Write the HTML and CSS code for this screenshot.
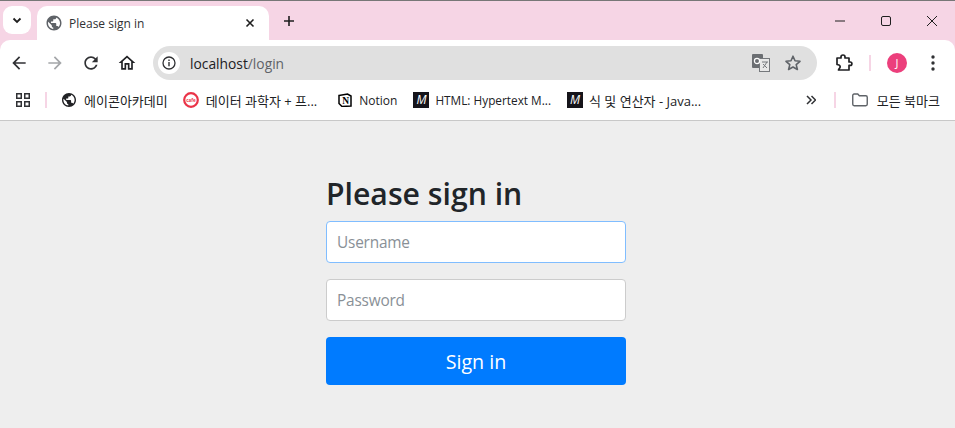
FILE: index.html
```html
<!DOCTYPE html>
<html>
<head>
  <title>Please sign in</title>
  <link rel="stylesheet" href="styles.css">
</head>
<body>
  <!-- Window top: tabs and window buttons -->
  <div class="tab-strip">
    <div class="tab-search">
      <svg width="12" height="12" viewBox="0 0 12 12"><path d="M2.5 4.5 6 8l3.5-3.5" fill="none" stroke="#1f1f1f" stroke-width="1.8"/></svg>
    </div>
    <div class="tab">
      <svg class="tab-globe" width="18" height="18" viewBox="0 0 24 24"><path fill="#5f6368" d="M12 2C6.48 2 2 6.48 2 12s4.48 10 10 10 10-4.48 10-10S17.52 2 12 2zm-1 17.93c-3.95-.49-7-3.85-7-7.93 0-.62.08-1.21.21-1.79L9 15v1c0 1.1.9 2 2 2v1.93zm6.9-2.54c-.26-.81-1-1.39-1.9-1.39h-1v-3c0-.55-.45-1-1-1H8v-2h2c.55 0 1-.45 1-1V7h2c1.1 0 2-.9 2-2v-.41c2.93 1.19 5 4.06 5 7.41 0 2.08-.8 3.97-2.1 5.39z"/></svg>
      <span class="tab-title">Please sign in</span>
      <svg width="10" height="10" viewBox="0 0 10 10"><path d="M1.5 1.5l7 7m0-7l-7 7" stroke="#1f1f1f" stroke-width="1.6"/></svg>
    </div>
    <svg class="new-tab" width="12" height="12" viewBox="0 0 12 12"><path d="M6 1v10M1 6h10" stroke="#1f1f1f" stroke-width="1.6"/></svg>
    <div class="window-buttons">
      <svg width="10" height="10" viewBox="0 0 10 10"><path d="M0 5h10" stroke="#1f1f1f"/></svg>
      <svg width="10" height="10" viewBox="0 0 10 10"><rect x=".5" y=".5" width="9" height="9" rx="1.5" fill="none" stroke="#1f1f1f"/></svg>
      <svg width="10" height="10" viewBox="0 0 10 10"><path d="M0 0l10 10M10 0L0 10" stroke="#1f1f1f"/></svg>
    </div>
  </div>

  <!-- Address bar row -->
  <div class="toolbar">
    <svg class="nav-icon" width="20" height="20" viewBox="0 0 24 24"><path fill="#303134" d="M20 11H7.83l5.59-5.59L12 4l-8 8 8 8 1.41-1.41L7.83 13H20v-2z"/></svg>
    <svg class="nav-icon" width="20" height="20" viewBox="0 0 24 24"><path fill="#a4a6a9" d="M4 11h12.17l-5.59-5.59L12 4l8 8-8 8-1.41-1.41L16.17 13H4v-2z"/></svg>
    <svg class="nav-icon" width="20" height="20" viewBox="0 0 24 24"><path fill="#303134" d="M17.65 6.35C16.2 4.9 14.21 4 12 4c-4.42 0-7.99 3.58-7.99 8s3.57 8 7.99 8c3.73 0 6.84-2.55 7.73-6h-2.08c-.82 2.33-3.04 4-5.65 4-3.31 0-6-2.69-6-6s2.69-6 6-6c1.66 0 3.14.69 4.22 1.78L13 11h7V4l-2.35 2.35z"/></svg>
    <svg class="nav-icon" width="20" height="20" viewBox="0 0 24 24"><path fill="#202124" d="M12 5.69l5 4.5V18h-2v-6H9v6H7v-7.81l5-4.5M12 3L2 12h3v8h6v-6h2v6h6v-8h3L12 3z"/></svg>
    <div class="address-bar">
      <div class="info-badge">
        <svg width="14" height="14" viewBox="0 0 14 14"><circle cx="7" cy="7" r="6" fill="none" stroke="#303134" stroke-width="1.3"/><path d="M7 6v4.2M7 3.6v1.4" stroke="#303134" stroke-width="1.4"/></svg>
      </div>
      <span class="url"><span class="url-host">localhost</span>/login</span>
      <svg class="translate-icon" width="18" height="20" viewBox="0 0 18 20"><rect x="0" y="1" width="11" height="14" rx="1" fill="#6b6e72"/><rect x="7.5" y="5.5" width="10" height="13" fill="#e8e8e8" stroke="#75787c"/><circle cx="5" cy="8" r="2.6" fill="none" stroke="#fff" stroke-width="1.2"/><path d="M10 9h6M15 9l-4 6M11 11l4 4" stroke="#75787c" fill="none"/></svg>
      <svg class="star-icon" width="18" height="18" viewBox="0 0 18 18"><path d="M9 2.2l2 4.6 5 .5-3.8 3.3 1.2 4.900L9 13l-4.400 2.500 1.200-4.900L2 7.300l5-.5z" fill="none" stroke="#5f6368" stroke-width="1.600" stroke-linejoin="round"/></svg>
    </div>
    <svg class="ext-icon" width="18" height="18" viewBox="0 0 18 18"><path d="M2 4h4V3a2 2 0 0 1 4 0v1h4v4h1.200a1.700 1.700 0 0 1 0 3.400H14V16H3.500l.8-1.500a2 2 0 0 0-.3-3.500L2 10.500z" fill="none" stroke="#202124" stroke-width="1.700" stroke-linejoin="round"/></svg>
    <div class="pink-sep"></div>
    <div class="avatar">J</div>
    <svg class="menu-icon" width="4" height="16" viewBox="0 0 4 16"><circle cx="2" cy="2" r="1.700" fill="#303134"/><circle cx="2" cy="8" r="1.700" fill="#303134"/><circle cx="2" cy="14" r="1.700" fill="#303134"/></svg>
  </div>

  <!-- Bookmarks row -->
  <div class="bookmarks">
    <svg class="apps-icon" width="14" height="14" viewBox="0 0 14 14"><g fill="none" stroke="#303134" stroke-width="1.500"><rect x=".75" y=".75" width="4.500" height="4.500"/><rect x="8.750" y=".75" width="4.500" height="4.500"/><rect x=".75" y="8.750" width="4.500" height="4.500"/><rect x="8.750" y="8.750" width="4.500" height="4.500"/></g></svg>
    <div class="pink-sep bookmark-sep"></div>
    <div class="bookmark bookmark-first">
      <svg width="14" height="14" viewBox="2 2 20 20"><path fill="#202124" d="M12 2C6.48 2 2 6.480 2 12s4.480 10 10 10 10-4.480 10-10S17.520 2 12 2zm-1 17.930c-3.950-.49-7-3.850-7-7.930 0-.62.08-1.210.21-1.790L9 15v1c0 1.100.9 2 2 2v1.930zm6.900-2.540c-.26-.81-1-1.390-1.900-1.390h-1v-3c0-.55-.45-1-1-1H8v-2h2c.55 0 1-.45 1-1V7h2c1.100 0 2-.9 2-2v-.41c2.930 1.190 5 4.060 5 7.410 0 2.080-.8 3.970-2.100 5.390z"/></svg>
      <span class="ko">에이콘아카데미</span>
    </div>
    <div class="bookmark bookmark-cafe">
      <svg width="16" height="16" viewBox="0 0 16 16"><circle cx="8" cy="8" r="6.800" fill="#fff" stroke="#ea3348" stroke-width="2.200"/><text x="8" y="9.500" font-size="4.500" font-weight="700" text-anchor="middle" fill="#ea3348">cafe</text></svg>
      <span class="ko">데이터 과학자 + 프...</span>
    </div>
    <div class="bookmark bookmark-notion">
      <svg width="14" height="14" viewBox="0 0 14 14"><path d="M1 2.500 9.500 1 13 3v10l-9 .5L1 10.500z" fill="#fff" stroke="#000" stroke-width="1.500"/><text x="7.800" y="11" font-size="9.500" font-weight="700" text-anchor="middle" class="notion-n">N</text></svg>
      <span>Notion</span>
    </div>
    <div class="bookmark bookmark-mdn">
      <div class="mdn-icon">M</div>
      <span>HTML: Hypertext M...</span>
    </div>
    <div class="bookmark bookmark-mdn">
      <div class="mdn-icon">M</div>
      <span class="ko">식 및 연산자 - Java...</span>
    </div>
    <svg class="more-icon" width="10" height="10" viewBox="0 0 10 10"><path d="M1 1l4 4-4 4M5.500 1l4 4-4 4" fill="none" stroke="#303134" stroke-width="1.500"/></svg>
    <div class="pink-sep bookmark-sep2"></div>
    <div class="bookmark all-bookmarks">
      <svg width="16" height="14" viewBox="0 0 16 14"><path d="M.75 2.500c0-.8.6-1.500 1.400-1.500h3.600l1.600 1.800h6.500c.8 0 1.400.6 1.400 1.400v7.100c0 .8-.6 1.400-1.400 1.400H2.150c-.8 0-1.400-.6-1.400-1.400z" fill="none" stroke="#5f6368" stroke-width="1.400"/></svg>
      <span class="ko">모든 북마크</span>
    </div>
  </div>

  <!-- Login form -->
  <div class="page">
    <form class="signin-form">
      <h2>Please sign in</h2>
      <input class="field field-focus" type="text" placeholder="Username">
      <input class="field" type="password" placeholder="Password">
      <button type="button" class="signin-button">Sign in</button>
    </form>
  </div>
</body>
</html>
```

FILE: styles.css
```css
html, body {
  height: 100%;
}

body {
  margin: 0;
  display: flex;
  flex-direction: column;
  overflow: hidden;
  background-color: #f6d5e5;
  font-family: "Open Sans", "Noto Sans CJK KR", sans-serif;
  color: #1f1f1f;
}

svg {
  display: block;
  flex: none;
}

/* Tab strip */
.tab-strip {
  height: 39px;
  border-top: 1px solid #777;
  display: flex;
  align-items: flex-start;
}

.tab-search {
  width: 28px;
  height: 28px;
  margin: 5px 0 0 3px;
  background-color: #fff;
  border-radius: 9px;
  display: flex;
  align-items: center;
  justify-content: center;
}

.tab {
  width: 232px;
  height: 34px;
  margin: 5px 0 0 6px;
  padding: 0 14px 0 8px;
  box-sizing: border-box;
  background-color: #fff;
  border-radius: 10px 10px 0 0;
  display: flex;
  align-items: center;
}

.tab-globe {
  margin-right: 6px;
}

.tab-title {
  flex: 1;
  font-size: 12px;
  color: #303134;
}

.new-tab {
  margin: 14px 0 0 14px;
}

.window-buttons {
  margin: 15px 0 0 auto;
  padding-right: 18px;
  display: flex;
  gap: 36px;
}

/* Address bar row */
.toolbar {
  height: 40px;
  box-sizing: border-box;
  padding: 6px 20px 0 0;
  background-color: #fff;
  border-radius: 10px 10px 0 0;
  display: flex;
  align-items: center;
}

.nav-icon {
  margin-left: 16px;
}

.nav-icon:first-child {
  margin-left: 9px;
}

.address-bar {
  flex: 1;
  height: 34px;
  margin-left: 16px;
  padding: 0 15px 0 5px;
  background-color: #e0e0e0;
  border-radius: 17px;
  display: flex;
  align-items: center;
}

.info-badge {
  width: 22px;
  height: 22px;
  border-radius: 50%;
  background-color: #fff;
  display: flex;
  align-items: center;
  justify-content: center;
}

.url {
  flex: 1;
  margin-left: 10px;
  font-size: 13.8px;
  color: #5f6368;
}

.url-host {
  color: #202124;
}

.star-icon {
  margin-left: 14px;
}

.ext-icon {
  margin-left: 18px;
}

.pink-sep {
  width: 2px;
  height: 16px;
  background-color: #f6d5e5;
  flex: none;
}

.toolbar .pink-sep {
  margin-left: 16px;
}

.avatar {
  width: 20px;
  height: 20px;
  margin-left: 16px;
  border-radius: 50%;
  background-color: #ec3f7c;
  color: #fff;
  font-size: 11px;
  line-height: 20px;
  text-align: center;
}

.menu-icon {
  margin-left: 24px;
}

/* Bookmarks row */
.bookmarks {
  height: 40px;
  padding-left: 16px;
  background-color: #fff;
  border-bottom: 1px solid #c8c8c8;
  display: flex;
  align-items: center;
}

.bookmark-sep {
  margin-left: 15px;
}

.bookmark {
  margin-left: 16px;
  display: flex;
  align-items: center;
  gap: 7px;
  font-size: 12px;
  color: #202124;
  white-space: nowrap;
}

.bookmark .ko {
  font-size: 13px;
}

.bookmark-first {
  margin-left: 15px;
  gap: 8px;
}

.bookmark-cafe {
  margin-left: 15px;
}

.bookmark-notion {
  margin-left: 21px;
}

.bookmark-mdn {
  gap: 6px;
  font-size: 11.8px;
}

.notion-n {
  font-family: "Liberation Serif", serif;
}

.mdn-icon {
  width: 16px;
  height: 16px;
  background-color: #15141a;
  color: #fff;
  font-size: 12px;
  font-style: italic;
  line-height: 16px;
  text-align: center;
}

.more-icon {
  margin-left: auto;
}

.bookmark-sep2 {
  margin-left: 18px;
}

.all-bookmarks {
  margin: 0 15px 0 16px;
  gap: 9px;
}

/* Page content */
.page {
  flex: 1;
  padding: 54px 3px 0 0;
  background-color: #eee;
  display: flex;
  justify-content: center;
}

.signin-form {
  width: 300px;
  display: flex;
  flex-direction: column;
}

.signin-form h2 {
  margin: 0 0 8px;
  font-size: 30.2px;
  font-weight: 600;
  line-height: 38.4px;
  color: #212529;
}

.field {
  height: 42px;
  margin-bottom: 16px;
  padding: 0 10px;
  box-sizing: border-box;
  font-family: inherit;
  font-size: 15.4px;
  letter-spacing: -0.2px;
  background-color: #fff;
  border: 1px solid #ccc;
  border-radius: 4px;
  outline: none;
}

.field::placeholder {
  color: #6c757d;
  opacity: 0.8;
}

.field-focus {
  border-color: #80bdff;
}

.signin-button {
  height: 48px;
  padding: 0;
  font-family: inherit;
  font-size: 19.7px;
  color: #fff;
  background-color: #007bff;
  border: none;
  border-radius: 4px;
}
```
